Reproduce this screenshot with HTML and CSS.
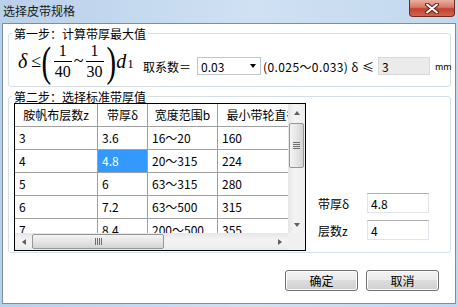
FILE: index.html
```html
<!DOCTYPE html>
<html lang="zh-CN">
<head>
    <meta charset="UTF-8">
    <title>选择皮带规格</title>
    <link rel="stylesheet" href="styles.css">
</head>
<body>
<div class="window">
    <div class="titlebar">
        <span class="title">选择皮带规格</span>
        <button class="close-btn" aria-label="关闭">
            <svg width="14" height="11" viewBox="0 0 14 11">
                <path d="M2 1.5 L12 9.5 M12 1.5 L2 9.5" stroke="#5a1d16" stroke-width="4" stroke-linecap="round"/>
                <path d="M2 1.5 L12 9.5 M12 1.5 L2 9.5" stroke="#fff" stroke-width="2" stroke-linecap="round"/>
            </svg>
        </button>
    </div>

    <div class="client">
        <!-- 第一步 -->
        <fieldset class="group step1">
            <legend>第一步：计算带厚最大值</legend>
            <div class="step1-row">
                <div class="formula">
                    <i class="delta">δ</i>
                    <span class="le">≤</span>
                    <span class="paren">(</span>
                    <span class="frac"><span class="num">1</span><span class="den">40</span></span>
                    <span class="tilde">~</span>
                    <span class="frac"><span class="num">1</span><span class="den">30</span></span>
                    <span class="paren">)</span>
                    <i class="var">d</i><span class="sub">1</span>
                </div>
                <div class="coef">
                    <span class="coef-label">取系数＝</span>
                    <div class="combo">
                        <span>0.03</span>
                        <span class="combo-arrow"></span>
                    </div>
                    <span class="range">(0.025～0.033) δ ≤</span>
                    <input class="textbox readonly" value="3" readonly>
                    <span class="unit">mm</span>
                </div>
            </div>
        </fieldset>

        <!-- 第二步 -->
        <fieldset class="group step2">
            <legend>第二步：选择标准带厚值</legend>
            <div class="step2-body">
                <div class="grid">
                    <div class="cells">
                        <div class="row head">
                            <div class="cell">胺帆布层数z</div>
                            <div class="cell">带厚δ</div>
                            <div class="cell">宽度范围b</div>
                            <div class="cell">最小带轮直径</div>
                        </div>
                        <div class="row">
                            <div class="cell">3</div>
                            <div class="cell">3.6</div>
                            <div class="cell">16～20</div>
                            <div class="cell">160</div>
                        </div>
                        <div class="row">
                            <div class="cell">4</div>
                            <div class="cell sel">4.8</div>
                            <div class="cell">20～315</div>
                            <div class="cell">224</div>
                        </div>
                        <div class="row">
                            <div class="cell">5</div>
                            <div class="cell">6</div>
                            <div class="cell">63～315</div>
                            <div class="cell">280</div>
                        </div>
                        <div class="row">
                            <div class="cell">6</div>
                            <div class="cell">7.2</div>
                            <div class="cell">63～500</div>
                            <div class="cell">315</div>
                        </div>
                        <div class="row">
                            <div class="cell">7</div>
                            <div class="cell">8.4</div>
                            <div class="cell">200～500</div>
                            <div class="cell">355</div>
                        </div>
                    </div>

                    <div class="vscroll">
                        <div class="sb-btn"><span class="arrow-up"></span></div>
                        <div class="thumb v-thumb"><span class="grip v-grip"></span></div>
                        <div class="track"></div>
                        <div class="sb-btn"><span class="arrow-down"></span></div>
                    </div>

                    <div class="hscroll">
                        <div class="sb-btn"><span class="arrow-left"></span></div>
                        <div class="thumb h-thumb"><span class="grip h-grip"></span></div>
                        <div class="track"></div>
                        <div class="sb-btn"><span class="arrow-right"></span></div>
                    </div>
                    <div class="corner"></div>
                </div>

                <div class="result">
                    <label class="result-row">
                        <span class="result-label">带厚δ</span>
                        <input class="textbox" value="4.8">
                    </label>
                    <label class="result-row">
                        <span class="result-label">层数z</span>
                        <input class="textbox" value="4">
                    </label>
                </div>
            </div>
        </fieldset>

        <div class="buttons">
            <button class="btn">确定</button>
            <button class="btn">取消</button>
        </div>
    </div>
</div>
</body>
</html>
```

FILE: styles.css
```css
* {
    box-sizing: border-box;
}
body {
    margin: 0;
    font-family: "Noto Sans CJK SC", "Noto Sans", sans-serif;
    font-size: 12px;
    color: #000;
    background-color: #c4d9ef;
}
.window {
    width: 458px;
    height: 307px;
    padding: 0 2px 3px;
    background: linear-gradient(to right, #b9d0ea, #cfe1f3 55%, #c3d8ee);
    display: flex;
    flex-direction: column;
}
.titlebar {
    height: 23px;
    flex: none;
    display: flex;
    justify-content: space-between;
    align-items: flex-start;
}
.title {
    padding: 4px 0 0 1px;
    line-height: 14px;
    color: #1b1b1b;
}
.close-btn {
    width: 46px;
    height: 17px;
    margin-right: 1px;
    padding: 0;
    border: 1px solid #6e2b22;
    border-top: none;
    border-radius: 0 0 4px 4px;
    background: linear-gradient(#eab0a2, #d97966 45%, #c4412e 55%, #d2644f);
    display: flex;
    align-items: center;
    justify-content: center;
}
.client {
    flex: 1;
    background-color: #fff;
    border: 1px solid #7b8ea4;
    display: flex;
    flex-direction: column;
}

/* group boxes */
.group {
    margin: 3px 4px 0 5px;
    border: 1px solid #d5dfe5;
    border-radius: 3px;
    min-width: 0;
}
.group legend {
    padding: 0 2px;
    line-height: 13px;
    font-size: 12px;
}
.step1 {
    padding: 3px 0 6px 3px;
}
.step2 {
    padding: 0 0 1px 3px;
}

/* step 1 */
.step1-row {
    display: flex;
    height: 37px;
    margin-left: 6px;
}
.formula {
    width: 125px;
    flex: none;
    display: flex;
    align-items: center;
    font-family: "Liberation Serif", serif;
    font-size: 20px;
    white-space: nowrap;
}
.delta {
    margin-right: 4px;
}
.le {
    font-size: 18px;
}
.paren {
    font-size: 32px;
    line-height: 32px;
    transform: scale(0.9, 1.3);
}
.frac {
    display: inline-flex;
    flex-direction: column;
    align-items: center;
    font-size: 16px;
    line-height: 16px;
    margin: 0 2px;
}
.num {
    width: 100%;
    text-align: center;
    border-bottom: 1px solid #000;
    padding-bottom: 2px;
}
.den {
    padding: 2px 1px 0;
}
.tilde {
    font-size: 18px;
}
.sub {
    font-size: 13px;
    align-self: flex-end;
    margin-bottom: 8px;
    margin-left: 1px;
}
.coef {
    display: flex;
    align-items: center;
    align-self: flex-end;
    height: 18px;
    margin-bottom: 5px;
    white-space: nowrap;
}
.coef > * {
    flex: none;
}
.coef-label {
    margin-right: 6px;
}
.combo {
    width: 64px;
    height: 18px;
    border: 1px solid #c2c6cc;
    padding: 0 4px 0 3px;
    display: flex;
    align-items: center;
    justify-content: space-between;
}
.combo-arrow {
    width: 0;
    height: 0;
    border-left: 3.5px solid transparent;
    border-right: 3.5px solid transparent;
    border-top: 4px solid #000;
}
.range {
    width: 113px;
    margin-left: 2px;
    letter-spacing: 0.4px;
}
.textbox {
    font-family: "Noto Sans CJK SC", "Noto Sans", sans-serif;
    font-size: 12px;
    color: #000;
    padding: 0 3px;
    border: 1px solid #e2e3ea;
    border-top-color: #abadb3;
    outline: none;
}
.readonly {
    width: 52px;
    height: 18px;
    margin-left: 2px;
    background-color: #ebebeb;
    border-color: #d9d9d9;
}
.unit {
    margin-left: 5px;
    font-size: 9px;
}

/* step 2 */
.step2-body {
    display: flex;
    margin-left: 2px;
}
.grid {
    width: 292px;
    height: 148px;
    flex: none;
    border: 1px solid #000;
    display: grid;
    grid-template-columns: 273px 17px;
    grid-template-rows: 129px 17px;
    background-color: #fff;
}
.cells {
    overflow: hidden;
}
.row {
    display: grid;
    grid-template-columns: 83px 50px 70px 90px;
    height: 23px;
}
.cell {
    border-right: 1px solid #a0a0a0;
    border-bottom: 1px solid #a0a0a0;
    padding-left: 4px;
    line-height: 22px;
    white-space: nowrap;
    overflow: hidden;
}
.head .cell {
    padding: 0;
    text-align: center;
}
.cell.sel {
    background-color: #3399ff;
    color: #fff;
}

/* scroll bars */
.vscroll {
    display: flex;
    flex-direction: column;
    background: linear-gradient(to right, #e6e6e6, #f4f4f4 40%, #ececec);
}
.hscroll {
    display: flex;
    background: linear-gradient(#e6e6e6, #f4f4f4 40%, #ececec);
}
.corner {
    background-color: #f0f0f0;
}
.sb-btn {
    width: 17px;
    height: 17px;
    flex: none;
    display: flex;
    align-items: center;
    justify-content: center;
}
.track {
    flex: 1;
}
.thumb {
    border: 1px solid #979797;
    border-radius: 2px;
    display: flex;
    align-items: center;
    justify-content: center;
}
.v-thumb {
    height: 45px;
    margin: 2px 1px 0;
    background: linear-gradient(to right, #f3f3f3, #e6e6e6 50%, #d3d3d3);
}
.h-thumb {
    width: 132px;
    margin: 1px 0;
    background: linear-gradient(#f3f3f3, #e6e6e6 50%, #d3d3d3);
}
.grip {
    display: block;
}
.v-grip {
    width: 7px;
    height: 7px;
    background: repeating-linear-gradient(#6e6e6e 0 1px, transparent 1px 2px);
}
.h-grip {
    width: 7px;
    height: 7px;
    background: repeating-linear-gradient(to right, #6e6e6e 0 1px, transparent 1px 2px);
}
.arrow-up, .arrow-down, .arrow-left, .arrow-right {
    width: 0;
    height: 0;
}
.arrow-up {
    border-left: 3.5px solid transparent;
    border-right: 3.5px solid transparent;
    border-bottom: 4px solid #5f5f5f;
}
.arrow-down {
    border-left: 3.5px solid transparent;
    border-right: 3.5px solid transparent;
    border-top: 4px solid #5f5f5f;
}
.arrow-left {
    border-top: 3.5px solid transparent;
    border-bottom: 3.5px solid transparent;
    border-right: 4px solid #5f5f5f;
}
.arrow-right {
    border-top: 3.5px solid transparent;
    border-bottom: 3.5px solid transparent;
    border-left: 4px solid #5f5f5f;
}

.result {
    align-self: flex-end;
    margin: 0 0 11px 12px;
    display: flex;
    flex-direction: column;
    gap: 7px;
}
.result-row {
    display: flex;
    align-items: center;
}
.result-label {
    width: 49px;
}
.result-row .textbox {
    width: 62px;
    height: 20px;
}

/* buttons */
.buttons {
    margin-top: auto;
    margin-bottom: 12px;
    padding-right: 16px;
    display: flex;
    justify-content: flex-end;
    gap: 8px;
}
.btn {
    width: 73px;
    height: 21px;
    padding: 0;
    font-family: "Noto Sans CJK SC", "Noto Sans", sans-serif;
    font-size: 12px;
    color: #000;
    border: 1px solid #707070;
    border-radius: 3px;
    background: linear-gradient(#f2f2f2, #ebebeb 45%, #dddddd 50%, #cfcfcf);
    box-shadow: inset 0 0 0 1px #fcfcfc;
}
```
